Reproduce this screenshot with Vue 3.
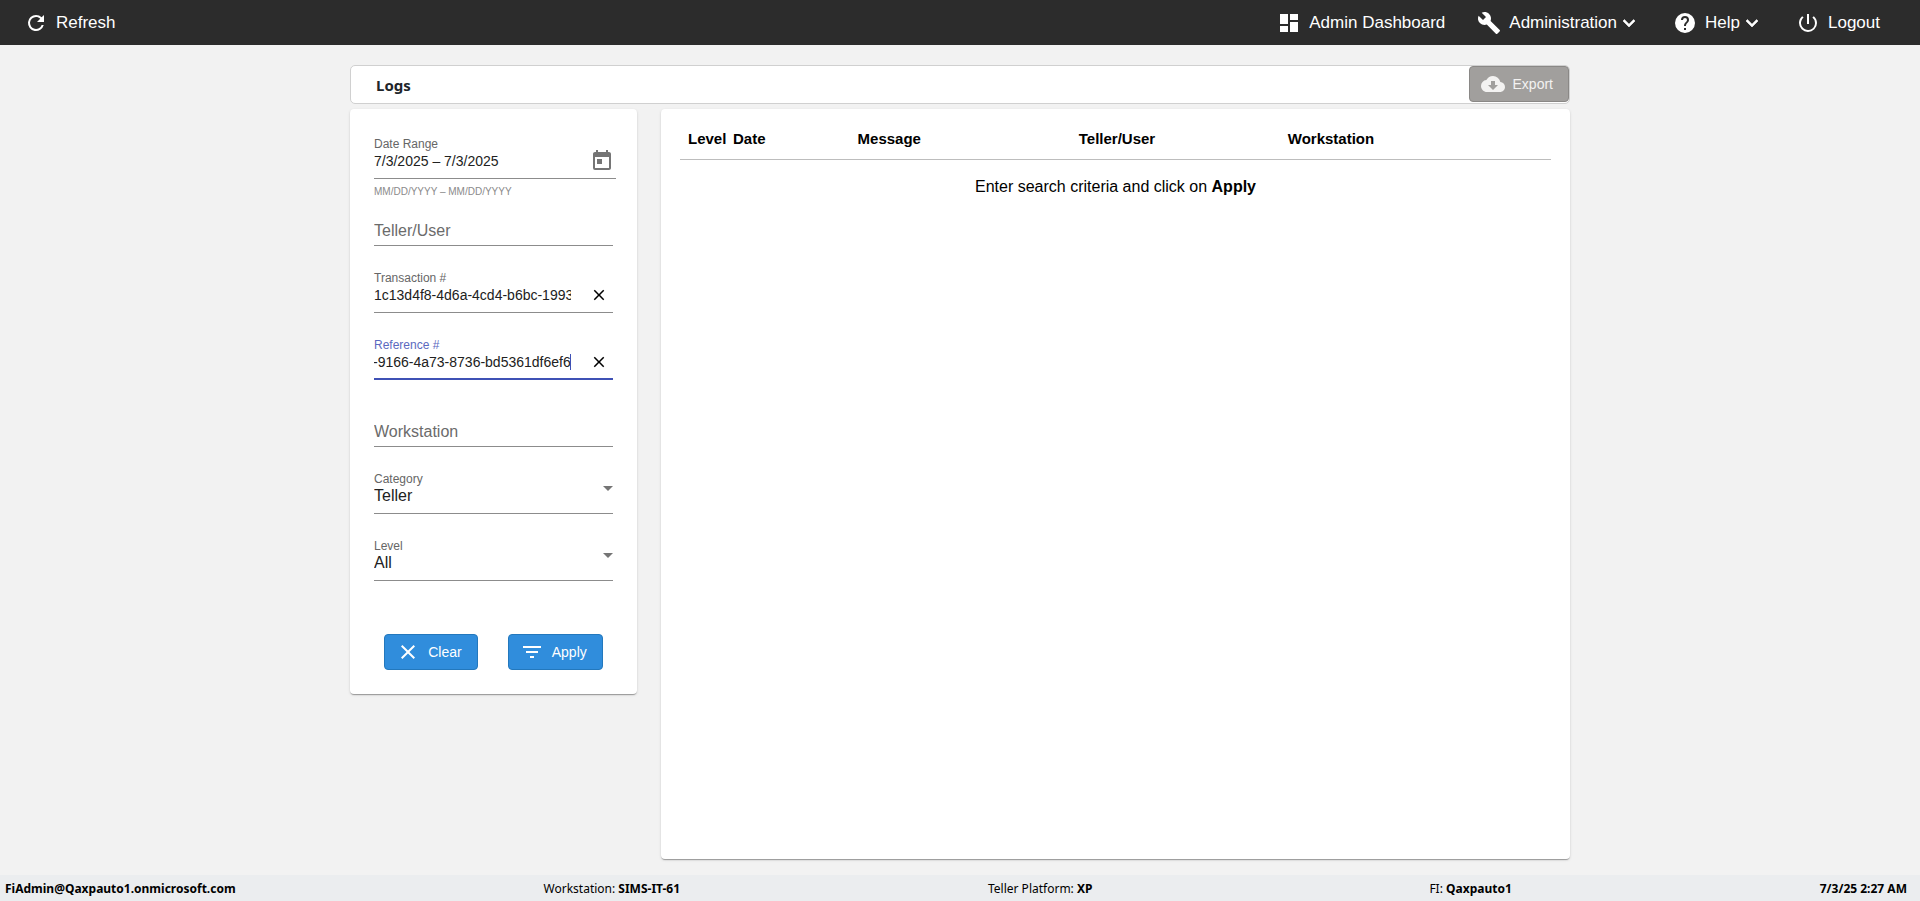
<script setup>
import { onMounted, ref } from 'vue'

const dateRange = ref('7/3/2025 – 7/3/2025')
const teller = ref('')
const transaction = ref('1c13d4f8-4d6a-4cd4-b6bc-1993')
const reference = ref('-9166-4a73-8736-bd5361df6ef6')
const workstation = ref('')
const category = ref('Teller')
const level = ref('All')
const referenceInput = ref(null)
const columns = ['Level', 'Date', 'Message', 'Teller/User', 'Workstation']

function clearAll() {
  teller.value = ''
  transaction.value = ''
  reference.value = ''
  workstation.value = ''
}

onMounted(() => {
  const el = referenceInput.value
  el.focus()
  el.setSelectionRange(el.value.length, el.value.length)
  el.scrollLeft = el.scrollWidth
})
</script>

<template>
  <div class="page">
    <header class="topbar">
      <button class="nav" type="button">
        <svg viewBox="0 0 24 24"><path d="M17.65 6.35A7.96 7.96 0 0 0 12 4a8 8 0 1 0 7.73 10h-2.08A6 6 0 1 1 12 6c1.66 0 3.14.69 4.22 1.78L13 11h7V4z" /></svg>
        <span>Refresh</span>
      </button>
      <nav class="links">
        <button class="nav" type="button">
          <svg viewBox="0 0 24 24"><path d="M3 13h8V3H3zm0 8h8v-6H3zm10 0h8V11h-8zm0-18v6h8V3z" /></svg>
          <span>Admin Dashboard</span>
        </button>
        <button class="nav" type="button">
          <svg viewBox="0 0 24 24"><path d="M22.7 19l-9.1-9.1c.9-2.3.4-5-1.5-6.9-2-2-5-2.4-7.4-1.3L9 6 6 9 1.6 4.7C.4 7.1.9 10.1 2.9 12.1c1.9 1.9 4.6 2.4 6.9 1.5l9.1 9.1c.4.4 1 .4 1.4 0l2.3-2.3c.5-.4.5-1.1.1-1.4z" /></svg>
          <span>Administration</span>
          <svg class="chevron" viewBox="0 0 24 24"><path d="M16.59 8.59L12 13.17 7.41 8.59 6 10l6 6 6-6z" /></svg>
        </button>
        <button class="nav" type="button">
          <svg viewBox="0 0 24 24"><path d="M12 2a10 10 0 1 0 0 20 10 10 0 0 0 0-20zm1 17h-2v-2h2zm2.07-7.75l-.9.92C13.45 12.9 13 13.5 13 15h-2v-.5c0-1.1.45-2.1 1.17-2.83l1.24-1.26c.37-.36.59-.86.59-1.41a2 2 0 1 0-4 0H8a4 4 0 1 1 8 0c0 .88-.36 1.68-.93 2.25z" /></svg>
          <span>Help</span>
          <svg class="chevron" viewBox="0 0 24 24"><path d="M16.59 8.59L12 13.17 7.41 8.59 6 10l6 6 6-6z" /></svg>
        </button>
        <button class="nav" type="button">
          <svg viewBox="0 0 24 24"><path d="M13 3h-2v10h2zm4.83 2.17l-1.42 1.42A6.92 6.92 0 0 1 19 12a7 7 0 1 1-11.42-5.41L6.17 5.17A8.93 8.93 0 0 0 3 12a9 9 0 1 0 18 0c0-2.74-1.23-5.18-3.17-6.83z" /></svg>
          <span>Logout</span>
        </button>
      </nav>
    </header>

    <main class="content">
      <div class="titlebar">
        <h1>Logs</h1>
        <button class="btn export" type="button" disabled>
          <svg viewBox="0 0 24 24"><path d="M19.35 10.04A7.49 7.49 0 0 0 12 4C9.11 4 6.6 5.64 5.35 8.04A5.994 5.994 0 0 0 0 14c0 3.31 2.69 6 6 6h13c2.76 0 5-2.24 5-5 0-2.64-2.05-4.78-4.65-4.96zM17 13l-5 5-5-5h3V9h4v4z" /></svg>
          <span>Export</span>
        </button>
      </div>

      <div class="columns">
        <form class="card filters" @submit.prevent>
          <div class="field wide">
            <div class="box">
              <div class="stack">
                <label for="range">Date Range</label>
                <input id="range" v-model="dateRange" type="text" />
              </div>
              <button class="icon-btn calendar" type="button" aria-label="Open calendar">
                <svg viewBox="0 0 24 24"><path d="M19 3h-1V1h-2v2H8V1H6v2H5c-1.11 0-1.99.9-1.99 2L3 19a2 2 0 0 0 2 2h14c1.1 0 2-.9 2-2V5c0-1.1-.9-2-2-2zm0 16H5V8h14zM7 10h5v5H7z" /></svg>
              </button>
            </div>
            <p class="hint">MM/DD/YYYY – MM/DD/YYYY</p>
          </div>

          <div class="field">
            <div class="box empty">
              <input v-model="teller" type="text" placeholder="Teller/User" aria-label="Teller/User" />
            </div>
          </div>

          <div class="field">
            <div class="box">
              <div class="stack">
                <label for="transaction">Transaction #</label>
                <input id="transaction" v-model="transaction" type="text" />
              </div>
              <button class="icon-btn clear" type="button" aria-label="Clear transaction" @click="transaction = ''">
                <svg viewBox="0 0 24 24"><path d="M19 6.41L17.59 5 12 10.59 6.41 5 5 6.41 10.59 12 5 17.59 6.41 19 12 13.41 17.59 19 19 17.59 13.41 12z" /></svg>
              </button>
            </div>
          </div>

          <div class="field">
            <div class="box active">
              <div class="stack caret">
                <label for="reference">Reference #</label>
                <input id="reference" ref="referenceInput" v-model="reference" type="text" />
              </div>
              <button class="icon-btn clear" type="button" aria-label="Clear reference" @click="reference = ''">
                <svg viewBox="0 0 24 24"><path d="M19 6.41L17.59 5 12 10.59 6.41 5 5 6.41 10.59 12 5 17.59 6.41 19 12 13.41 17.59 19 19 17.59 13.41 12z" /></svg>
              </button>
            </div>
          </div>

          <div class="field">
            <div class="box empty">
              <input v-model="workstation" type="text" placeholder="Workstation" aria-label="Workstation" />
            </div>
          </div>

          <div class="field">
            <div class="box">
              <div class="stack">
                <label for="category">Category</label>
                <select id="category" v-model="category"><option>Teller</option></select>
              </div>
              <svg class="arrow" viewBox="0 0 10 5"><path d="M0 0h10L5 5z" /></svg>
            </div>
          </div>

          <div class="field">
            <div class="box">
              <div class="stack">
                <label for="level">Level</label>
                <select id="level" v-model="level"><option>All</option></select>
              </div>
              <svg class="arrow" viewBox="0 0 10 5"><path d="M0 0h10L5 5z" /></svg>
            </div>
          </div>

          <div class="actions">
            <button class="btn primary" type="button" @click="clearAll">
              <svg viewBox="0 0 24 24"><path d="M19 6.41L17.59 5 12 10.59 6.41 5 5 6.41 10.59 12 5 17.59 6.41 19 12 13.41 17.59 19 19 17.59 13.41 12z" /></svg>
              <span>Clear</span>
            </button>
            <button class="btn primary" type="submit">
              <svg viewBox="0 0 24 24"><path d="M10 18h4v-2h-4zM3 6v2h18V6zm3 7h12v-2H6z" /></svg>
              <span>Apply</span>
            </button>
          </div>
        </form>

        <section class="card results">
          <table>
            <thead>
              <tr><th v-for="c in columns" :key="c" scope="col">{{ c }}</th></tr>
            </thead>
            <tbody>
              <tr><td colspan="5">Enter search criteria and click on <b>Apply</b></td></tr>
            </tbody>
          </table>
        </section>
      </div>
    </main>

    <footer class="status">
      <b>FiAdmin@Qaxpauto1.onmicrosoft.com</b>
      <span>Workstation: <b>SIMS-IT-61</b></span>
      <span>Teller Platform: <b>XP</b></span>
      <span class="fi">FI: <b>Qaxpauto1</b></span>
      <b>7/3/25 2:27 AM</b>
    </footer>
  </div>
</template>

<style>
body {
  background: #f2f2f2;
}
</style>

<style scoped>
.page,
.page * {
  box-sizing: border-box;
}
.page {
  display: flex;
  flex-direction: column;
  min-height: 100vh;
  font-family: "Liberation Sans", Arial, sans-serif;
  font-size: 16px;
  color: #000;
}
button,
input,
select {
  font: inherit;
  color: inherit;
  margin: 0;
  padding: 0;
  border: 0;
  background: none;
  outline: none;
  border-radius: 0;
}
svg {
  width: 24px;
  height: 24px;
  fill: currentColor;
  flex: none;
  display: block;
}

.topbar {
  display: flex;
  justify-content: space-between;
  align-items: center;
  height: 45px;
  padding: 0 40px 0 24px;
  background: #2c2c2c;
  color: #fff;
}
.links {
  display: flex;
  gap: 32px;
}
.nav {
  display: flex;
  align-items: center;
  font-size: 17px;
  line-height: 24px;
}
.nav span {
  margin-left: 8px;
}
.chevron {
  stroke: currentColor;
  stroke-width: 0.6;
}

.content {
  flex: 1;
  display: flex;
  flex-direction: column;
  width: 100%;
  max-width: 1220px;
  margin: 0 auto;
  padding: 20px 0 16px;
}
.titlebar {
  display: flex;
  justify-content: space-between;
  align-items: flex-start;
  height: 39px;
  border: 1px solid #d0d0d0;
  border-radius: 5px;
  background: #fff;
}
h1 {
  margin: 0;
  padding-left: 25px;
  font: bold 15px/38px "Noto Sans", "Segoe UI", sans-serif;
  color: #212529;
}
.btn {
  display: flex;
  align-items: center;
  height: 36px;
  border: 1px solid #2378bd;
  border-radius: 4px;
  font-size: 14px;
}
.export {
  padding: 0 15px 0 11px;
  gap: 8px;
  background: #a19f9d;
  border-color: #8a8886;
  color: #f3f2f1;
}
.primary {
  padding: 0 15px 0 11px;
  gap: 8px;
  background: #308ddc;
  color: #fff;
}

.columns {
  flex: 1;
  display: flex;
  align-items: flex-start;
  gap: 24px;
  margin-top: 5px;
}
.card {
  background: #fff;
  border-radius: 4px;
  box-shadow: 0 2px 1px -1px rgba(0, 0, 0, 0.2), 0 1px 1px rgba(0, 0, 0, 0.14), 0 1px 3px rgba(0, 0, 0, 0.12);
}
.filters {
  width: 287px;
  padding: 22px 24px 24px;
}
.results {
  flex: 1;
  align-self: stretch;
  padding: 10px 19px;
}

.field {
  min-height: 67px;
}
.field.wide {
  margin-right: -3px;
}
.box {
  display: flex;
  align-items: flex-start;
  height: 48px;
  padding-top: 6px;
  border-bottom: 1px solid #8c8c8c;
}
.box.empty {
  padding-top: 23px;
}
.box.active {
  border-bottom: 2px solid #3f51b5;
}
.stack {
  position: relative;
  flex: 1;
  min-width: 0;
}
label {
  display: block;
  font-size: 12px;
  line-height: 14px;
  color: #666;
}
.active label {
  color: #5b69c0;
}
input,
select {
  display: block;
  width: 100%;
  height: 20px;
  line-height: 20px;
}
.stack input {
  font-size: 14px;
  color: #212121;
}
select {
  appearance: none;
  color: #212121;
}
input::placeholder {
  color: #6b6b6b;
  opacity: 1;
}
.caret input {
  caret-color: transparent;
}
.caret::after {
  content: "";
  position: absolute;
  right: 0;
  bottom: 2px;
  width: 1px;
  height: 16px;
  background: #3f51b5;
}
.icon-btn {
  display: block;
}
.calendar {
  margin: 12px 2px 0 0;
  color: #757575;
}
.clear {
  margin: 15px 5px 0 19px;
}
.clear svg {
  width: 18px;
  height: 18px;
}
svg.arrow {
  width: 10px;
  height: 5px;
  margin-top: 14px;
  color: #757575;
}
.hint {
  margin: 0;
  padding-top: 6px;
  font-size: 10px;
  line-height: 13px;
  color: #8a8a8a;
}
.actions {
  display: flex;
  justify-content: center;
  gap: 30px;
  margin-top: 34px;
}

table {
  width: 100%;
  table-layout: fixed;
  border-collapse: collapse;
}
th {
  height: 40px;
  padding: 0;
  font-size: 15px;
  text-align: left;
  white-space: nowrap;
  border-bottom: 1px solid #bdbdbd;
}
th:nth-child(1) {
  width: 53px;
  padding-left: 8px;
}
th:nth-child(2) {
  width: 14.3%;
}
th:nth-child(3) {
  width: 25.4%;
}
th:nth-child(4) {
  width: 24%;
}
td {
  padding: 17px 0;
  line-height: 20px;
  text-align: center;
}

.status {
  display: flex;
  justify-content: space-between;
  height: 26px;
  padding: 0 13px 0 5px;
  background: #ebedef;
  font: 12px/27px "Noto Sans", "Segoe UI", sans-serif;
}
.fi {
  padding-left: 29px;
}
</style>
